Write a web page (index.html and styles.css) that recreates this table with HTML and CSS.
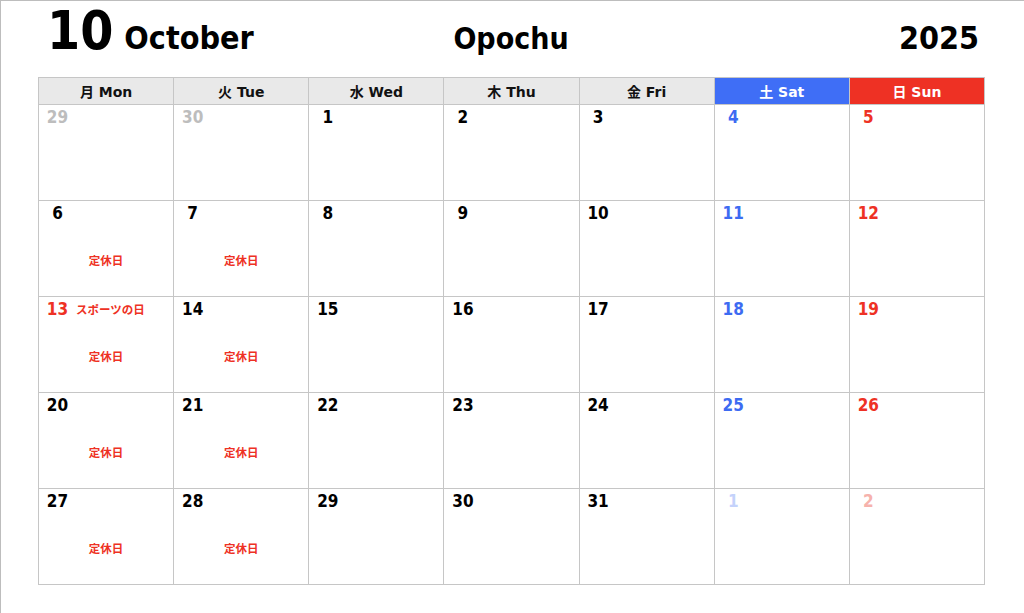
FILE: index.html
```html
<!DOCTYPE html>
<html lang="ja">
<head>
<meta charset="utf-8">
<link rel="stylesheet" href="styles.css">
</head>
<body>
<div class="page">
  <div class="sel-mark"></div>
  <header class="title">
    <div class="title-left"><span class="month-num">10</span><span class="month-name">October</span></div>
    <div class="title-center">Opochu</div>
    <div class="title-right">2025</div>
  </header>
  <div class="cal">
    <div class="hd">月 Mon</div>
    <div class="hd">火 Tue</div>
    <div class="hd">水 Wed</div>
    <div class="hd">木 Thu</div>
    <div class="hd">金 Fri</div>
    <div class="hd sat">土 Sat</div>
    <div class="hd sun">日 Sun</div>

    <div class="cell"><div class="top"><span class="num other">29</span></div></div>
    <div class="cell"><div class="top"><span class="num other">30</span></div></div>
    <div class="cell"><div class="top"><span class="num">1</span></div></div>
    <div class="cell"><div class="top"><span class="num">2</span></div></div>
    <div class="cell"><div class="top"><span class="num">3</span></div></div>
    <div class="cell"><div class="top"><span class="num blue">4</span></div></div>
    <div class="cell"><div class="top"><span class="num red">5</span></div></div>

    <div class="cell"><div class="top"><span class="num">6</span></div><div class="closed">定休日</div></div>
    <div class="cell"><div class="top"><span class="num">7</span></div><div class="closed">定休日</div></div>
    <div class="cell"><div class="top"><span class="num">8</span></div></div>
    <div class="cell"><div class="top"><span class="num">9</span></div></div>
    <div class="cell"><div class="top"><span class="num">10</span></div></div>
    <div class="cell"><div class="top"><span class="num blue">11</span></div></div>
    <div class="cell"><div class="top"><span class="num red">12</span></div></div>

    <div class="cell"><div class="top"><span class="num red">13</span><span class="holiday">スポーツの日</span></div><div class="closed">定休日</div></div>
    <div class="cell"><div class="top"><span class="num">14</span></div><div class="closed">定休日</div></div>
    <div class="cell"><div class="top"><span class="num">15</span></div></div>
    <div class="cell"><div class="top"><span class="num">16</span></div></div>
    <div class="cell"><div class="top"><span class="num">17</span></div></div>
    <div class="cell"><div class="top"><span class="num blue">18</span></div></div>
    <div class="cell"><div class="top"><span class="num red">19</span></div></div>

    <div class="cell"><div class="top"><span class="num">20</span></div><div class="closed">定休日</div></div>
    <div class="cell"><div class="top"><span class="num">21</span></div><div class="closed">定休日</div></div>
    <div class="cell"><div class="top"><span class="num">22</span></div></div>
    <div class="cell"><div class="top"><span class="num">23</span></div></div>
    <div class="cell"><div class="top"><span class="num">24</span></div></div>
    <div class="cell"><div class="top"><span class="num blue">25</span></div></div>
    <div class="cell"><div class="top"><span class="num red">26</span></div></div>

    <div class="cell"><div class="top"><span class="num">27</span></div><div class="closed">定休日</div></div>
    <div class="cell"><div class="top"><span class="num">28</span></div><div class="closed">定休日</div></div>
    <div class="cell"><div class="top"><span class="num">29</span></div></div>
    <div class="cell"><div class="top"><span class="num">30</span></div></div>
    <div class="cell"><div class="top"><span class="num">31</span></div></div>
    <div class="cell"><div class="top"><span class="num next-blue">1</span></div></div>
    <div class="cell"><div class="top"><span class="num next-red">2</span></div></div>
  </div>
</div>
</body>
</html>
```

FILE: styles.css
```css
* { box-sizing: border-box; }
html, body { margin: 0; padding: 0; background: #fff; }
body {
  font-family: "DejaVu Sans", "Noto Sans CJK JP", sans-serif;
  font-weight: bold;
  color: #000;
}
.page {
  position: relative;
  width: 1024px;
  height: 613px;
  border-top: 1px solid #bdbdbd;
  border-left: 1px solid #bdbdbd;
  padding-left: 37px;
  overflow: hidden;
}
.sel-mark {
  position: absolute;
  top: -1px;
  left: 477px;
  width: 101px;
  height: 1px;
  background: #2f7a45;
}
.title {
  display: grid;
  grid-template-columns: 1fr auto 1fr;
  align-items: baseline;
  width: 947px;
  height: 76px;
  padding: 0 6px 0 9px;
  font-stretch: condensed;
}
.title-left { display: flex; align-items: baseline; padding-top: 4px; }
.month-num { font-size: 53px; line-height: 52px; }
.month-name { font-size: 32px; margin-left: 11px; }
.title-center { font-size: 30px; text-align: center; padding-right: 4px; }
.title-right { font-size: 32px; text-align: right; }

.cal {
  display: grid;
  grid-template-columns: repeat(7, 1fr);
  grid-template-rows: 27px repeat(5, 96px);
  width: 947px;
  border-top: 1px solid #c6c6c6;
  border-left: 1px solid #c6c6c6;
}
.hd {
  display: flex;
  align-items: center;
  justify-content: center;
  background: #e9e9e9;
  border-right: 1px solid #c6c6c6;
  border-bottom: 1px solid #c6c6c6;
  font-size: 14px;
  color: #111;
}
.hd.sat { background: #3f6ef6; color: #fff; }
.hd.sun { background: #ee3124; color: #fff; }
.cell {
  display: flex;
  flex-direction: column;
  border-right: 1px solid #c6c6c6;
  border-bottom: 1px solid #c6c6c6;
  padding-top: 2px;
}
.top {
  display: flex;
  align-items: center;
  padding-left: 7px;
  height: 20px;
}
.num {
  display: inline-block;
  width: 23px;
  text-align: center;
  font-size: 17px;
  line-height: 20px;
  font-stretch: condensed;
  color: #000;
}
.num.other { color: #bdbdbd; }
.num.blue { color: #3d6bf2; }
.num.red { color: #ee3124; }
.num.next-blue { color: #c4d2fb; }
.num.next-red { color: #f6b2ac; }
.holiday {
  margin-left: 7px;
  font-size: 11.5px;
  color: #ee3124;
  font-family: "Noto Sans CJK JP", sans-serif;
  font-weight: bold;
}
.closed {
  margin-top: 30px;
  text-align: center;
  font-size: 11.5px;
  line-height: 14px;
  color: #ee3124;
  font-family: "Noto Sans CJK JP", sans-serif;
  font-weight: bold;
}
```
